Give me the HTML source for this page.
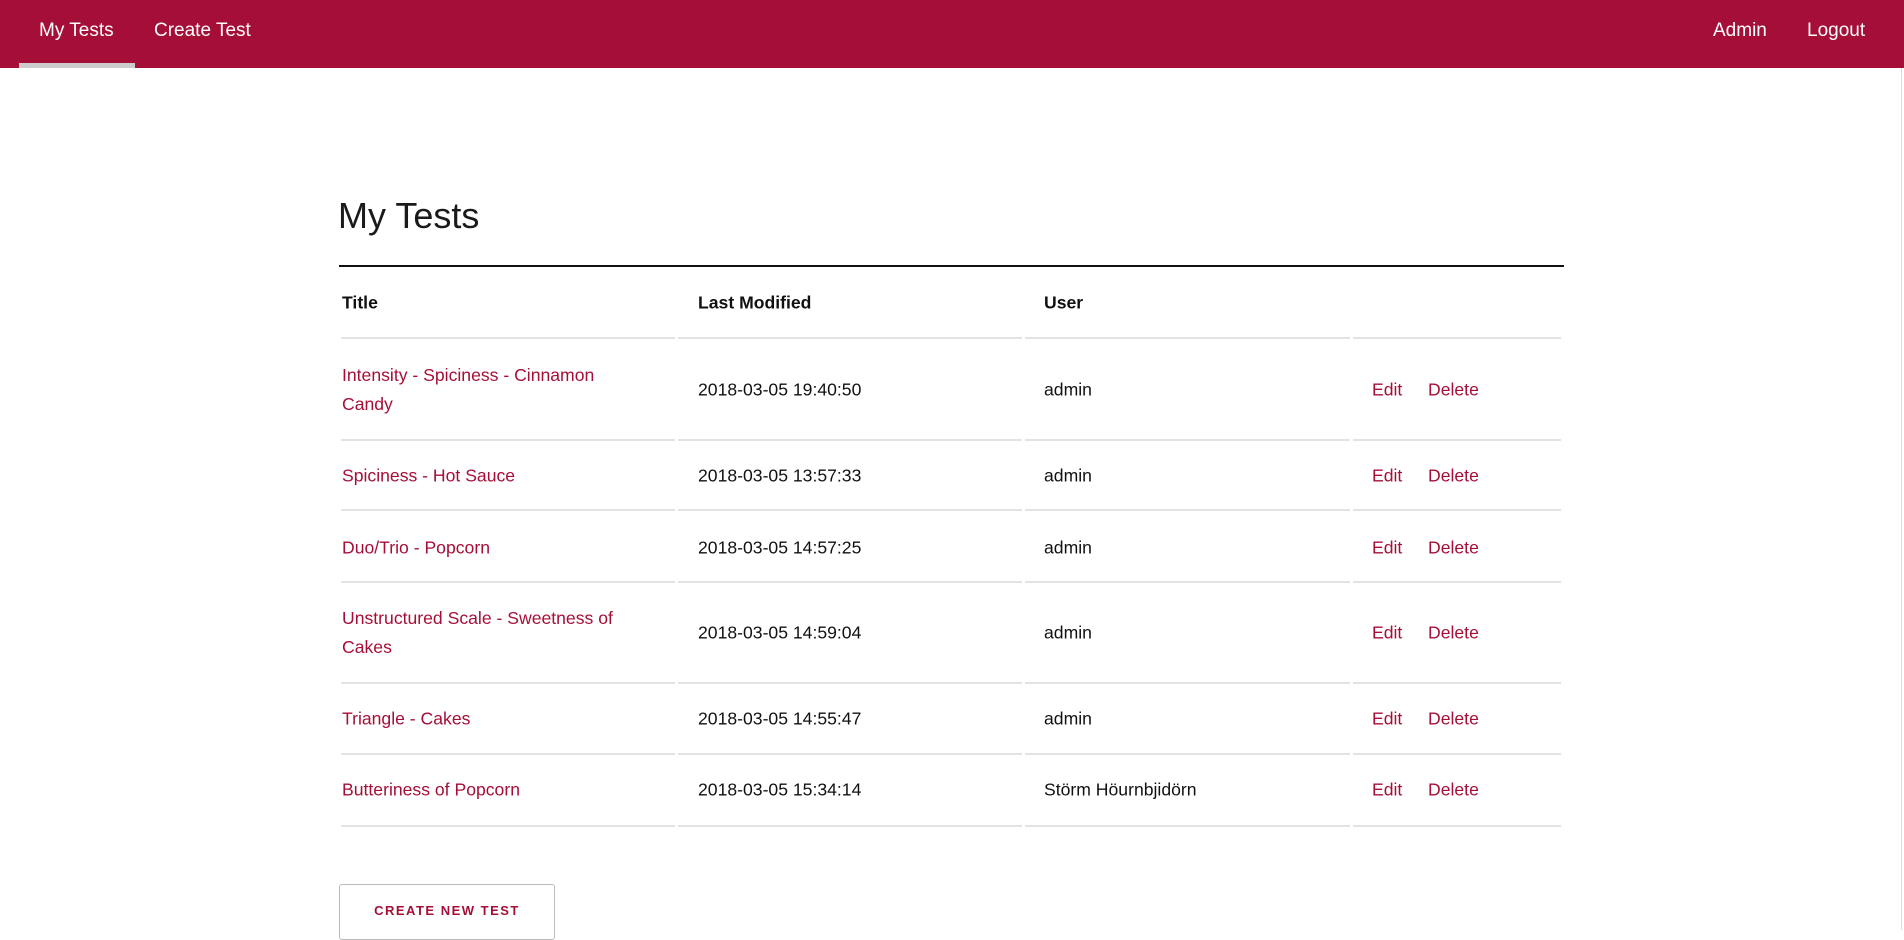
<!DOCTYPE html>
<html><head><meta charset="utf-8"><style>
*{margin:0;padding:0;box-sizing:border-box}
body{width:1904px;height:930px;overflow:hidden;background:#fff;font-family:"Liberation Sans",Arial,sans-serif;color:#111;position:relative}
.nav{position:absolute;left:0;top:0;width:1904px;height:68px;background:#a50f37}
.nav a{position:absolute;top:0;height:68px;line-height:62px;color:#fff;font-size:19px;text-decoration:none}
.act{position:absolute;left:19px;top:63px;width:116px;height:5px;background:#ccc}
h1{position:absolute;left:338px;top:192px;font-size:36px;font-weight:normal;color:#1a1a1a;line-height:48px}
.hr{position:absolute;left:339px;top:265px;width:1225px;height:2px;background:#111}
.t{position:absolute;font-size:17.6px;line-height:29px;transform:translateY(-50%)}
.h{font-weight:bold}
.r{color:#a50f37}
.ln{position:absolute;height:2px;background:#e3e3e3}
.btn{position:absolute;left:339px;top:884px;width:216px;height:56px;border:1px solid #bbb;border-radius:3px;color:#a50f37;font-size:13px;font-weight:bold;letter-spacing:1.5px;text-align:center;line-height:52px}
.sb{position:absolute;right:2px;top:68px;width:1px;height:862px;background:#ddd}
</style></head><body>
<div class="nav">
<a style="left:39px">My Tests</a>
<a style="left:154px">Create Test</a>
<a style="left:1713px">Admin</a>
<a style="left:1807px">Logout</a>
<div class="act"></div>
</div>
<div class="sb"></div>
<h1>My Tests</h1>
<div class="hr"></div>

<div class="t h" style="left:342px;top:303px">Title</div>
<div class="t h" style="left:698px;top:303px">Last Modified</div>
<div class="t h" style="left:1044px;top:303px">User</div>

<div class="t r" style="left:342px;top:390px">Intensity - Spiciness - Cinnamon<br>Candy</div>
<div class="t" style="left:698px;top:390px">2018-03-05 19:40:50</div>
<div class="t" style="left:1044px;top:390px">admin</div>
<div class="t r" style="left:1372px;top:390px">Edit</div><div class="t r" style="left:1428px;top:390px">Delete</div>

<div class="t r" style="left:342px;top:476px">Spiciness - Hot Sauce</div>
<div class="t" style="left:698px;top:476px">2018-03-05 13:57:33</div>
<div class="t" style="left:1044px;top:476px">admin</div>
<div class="t r" style="left:1372px;top:476px">Edit</div><div class="t r" style="left:1428px;top:476px">Delete</div>

<div class="t r" style="left:342px;top:548px">Duo/Trio - Popcorn</div>
<div class="t" style="left:698px;top:548px">2018-03-05 14:57:25</div>
<div class="t" style="left:1044px;top:548px">admin</div>
<div class="t r" style="left:1372px;top:548px">Edit</div><div class="t r" style="left:1428px;top:548px">Delete</div>

<div class="t r" style="left:342px;top:633px">Unstructured Scale - Sweetness of<br>Cakes</div>
<div class="t" style="left:698px;top:633px">2018-03-05 14:59:04</div>
<div class="t" style="left:1044px;top:633px">admin</div>
<div class="t r" style="left:1372px;top:633px">Edit</div><div class="t r" style="left:1428px;top:633px">Delete</div>

<div class="t r" style="left:342px;top:719px">Triangle - Cakes</div>
<div class="t" style="left:698px;top:719px">2018-03-05 14:55:47</div>
<div class="t" style="left:1044px;top:719px">admin</div>
<div class="t r" style="left:1372px;top:719px">Edit</div><div class="t r" style="left:1428px;top:719px">Delete</div>

<div class="t r" style="left:342px;top:790px">Butteriness of Popcorn</div>
<div class="t" style="left:698px;top:790px">2018-03-05 15:34:14</div>
<div class="t" style="left:1044px;top:790px">Störm Höurnbjidörn</div>
<div class="t r" style="left:1372px;top:790px">Edit</div><div class="t r" style="left:1428px;top:790px">Delete</div>

<div id="lines"></div>
<script>
var ys=[337,439,509,581,682,753,825],xs=[[341,675],[678,1022],[1025,1350],[1353,1561]],h='';
ys.forEach(function(y){xs.forEach(function(x){h+='<div class="ln" style="top:'+y+'px;left:'+x[0]+'px;width:'+(x[1]-x[0])+'px"></div>';});});
document.getElementById('lines').innerHTML=h;
</script>
<div class="btn">CREATE NEW TEST</div>
</body></html>
